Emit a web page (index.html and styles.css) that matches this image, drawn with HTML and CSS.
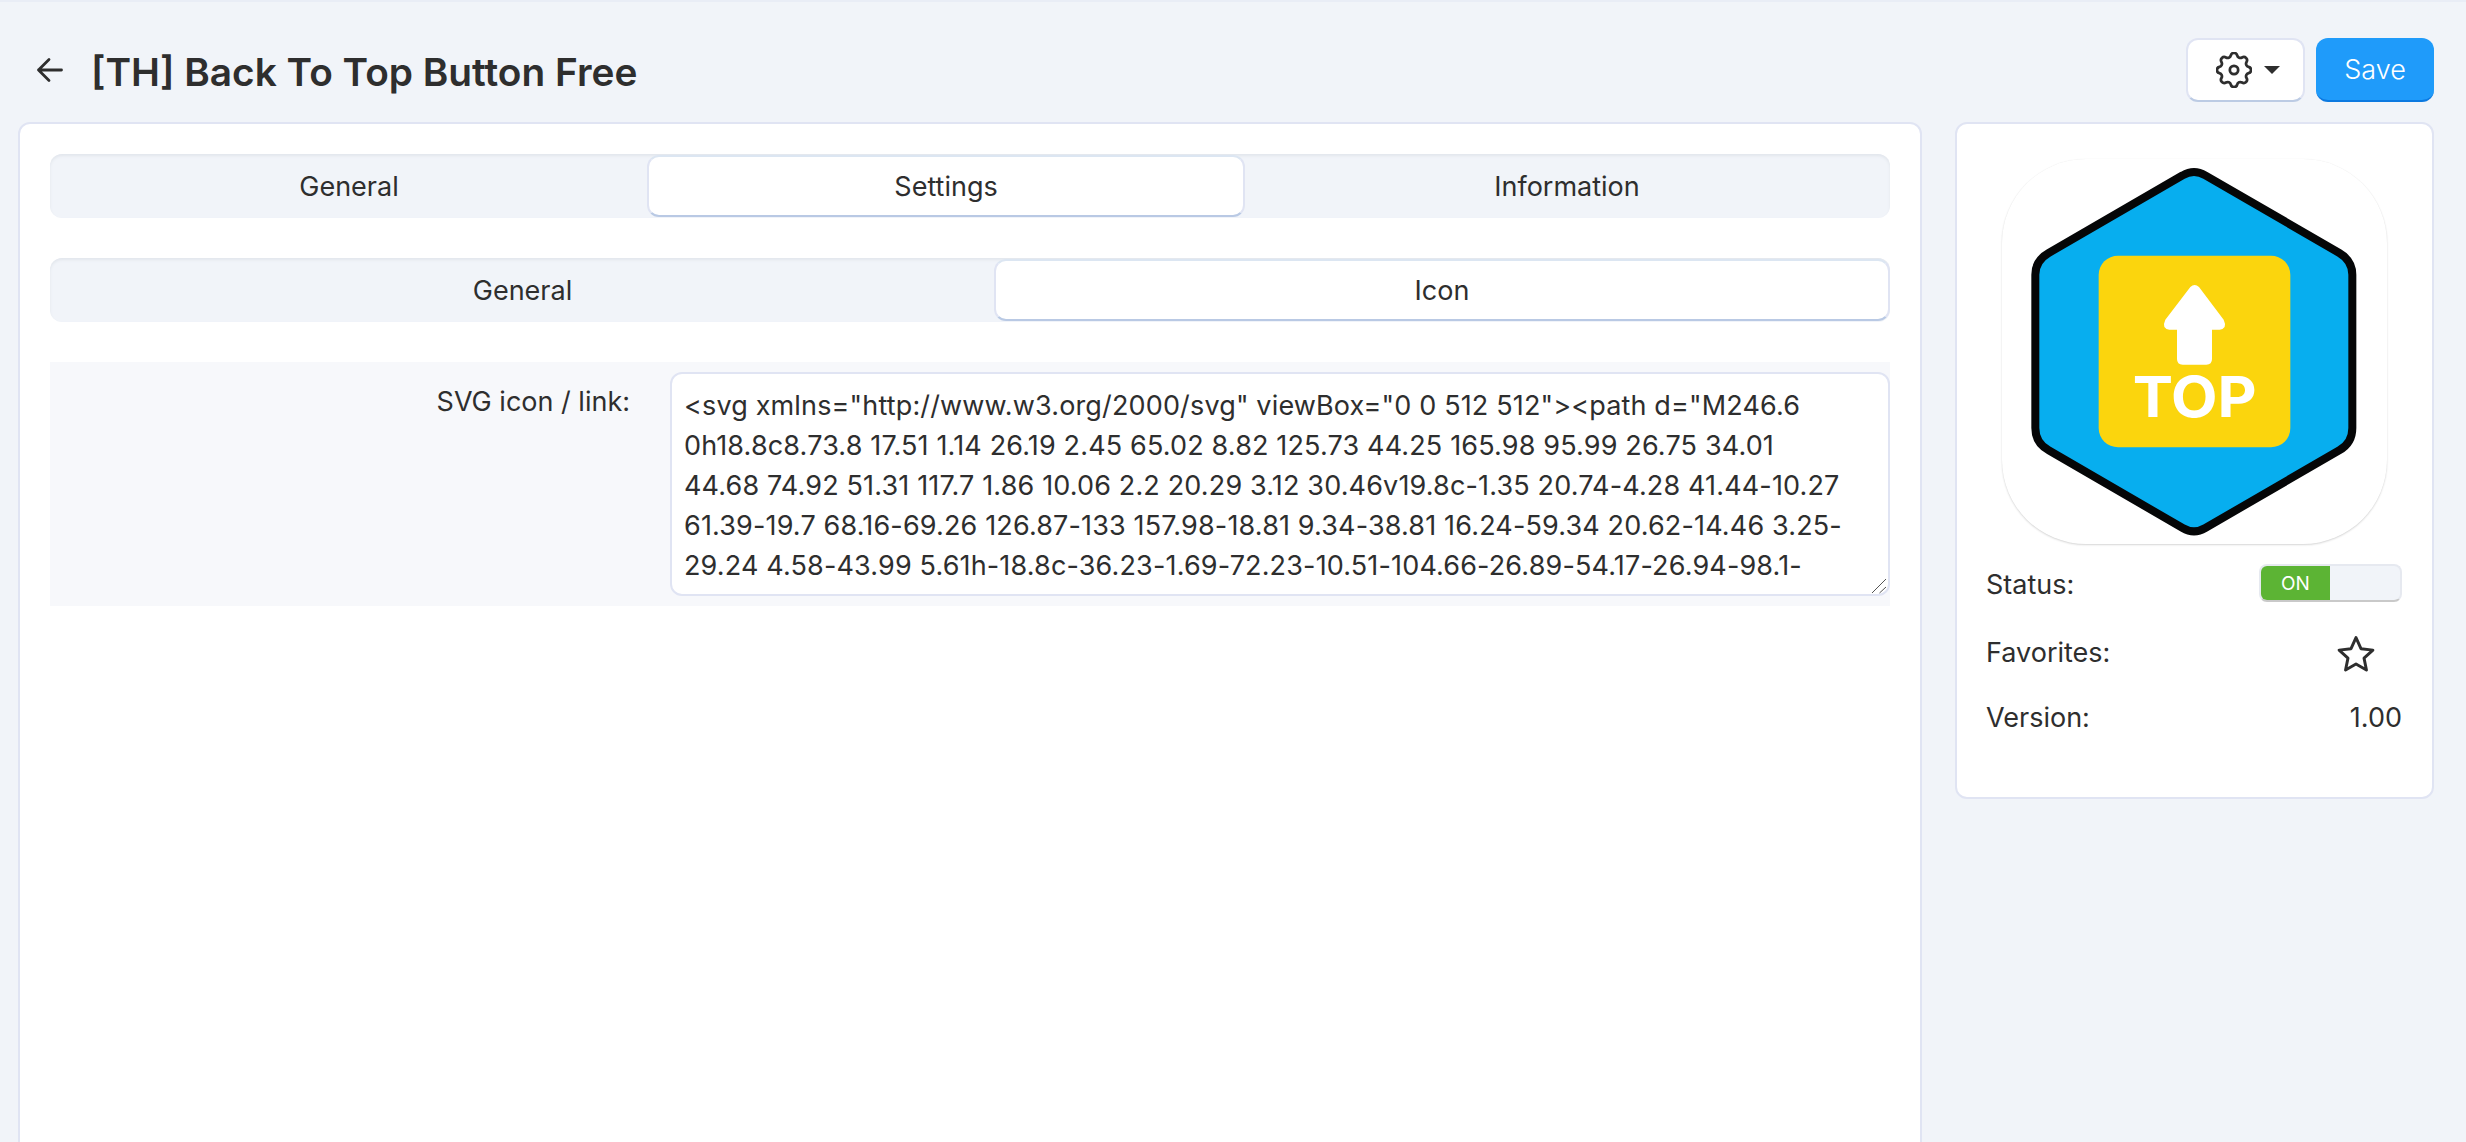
FILE: index.html
```html
<!DOCTYPE html>
<html lang="en">
<head>
<meta charset="utf-8">
<title>[TH] Back To Top Button Free</title>
<link rel="stylesheet" href="styles.css">
</head>
<body>
<header class="topbar">
  <a class="back" href="#" aria-label="Back">
    <svg class="back-icon" viewBox="0 0 32 32"><path d="M27.5 16H4.5M15 5.5 4.5 16 15 26.5"/></svg>
  </a>
  <h1 class="title">[TH] Back To Top Button Free</h1>
  <div class="actions">
    <button class="btn btn-light" type="button" aria-label="Options">
      <svg class="gear" viewBox="2.5 2.5 19 19"><path d="M10.325 4.317c.426-1.756 2.924-1.756 3.35 0a1.724 1.724 0 0 0 2.573 1.066c1.543-.94 3.31.826 2.37 2.37a1.724 1.724 0 0 0 1.065 2.572c1.756.426 1.756 2.924 0 3.35a1.724 1.724 0 0 0-1.066 2.573c.94 1.543-.826 3.31-2.37 2.37a1.724 1.724 0 0 0-2.572 1.065c-.426 1.756-2.924 1.756-3.35 0a1.724 1.724 0 0 0-2.573-1.066c-1.543.94-3.31-.826-2.37-2.37a1.724 1.724 0 0 0-1.065-2.572c-1.756-.426-1.756-2.924 0-3.35a1.724 1.724 0 0 0 1.066-2.573c-.94-1.543.826-3.31 2.37-2.37c1 .608 2.296.07 2.572-1.065z"/><circle cx="12" cy="12" r="2.2"/></svg>
      <span class="caret"></span>
    </button>
    <button class="btn btn-primary" type="button">Save</button>
  </div>
</header>
<div class="layout">
  <main class="card main">
    <nav class="tabs tabs-main">
      <a class="tab" href="#">General</a>
      <a class="tab active" href="#">Settings</a>
      <a class="tab" href="#">Information</a>
    </nav>
    <nav class="tabs tabs-sub">
      <a class="tab" href="#">General</a>
      <a class="tab active" href="#">Icon</a>
    </nav>
    <div class="form-row">
      <label class="form-label" for="svgicon">SVG icon / link:</label>
      <div class="input-wrap">
        <textarea class="form-input" id="svgicon" spellcheck="false" wrap="off">&lt;svg xmlns="http://www.w3.org/2000/svg" viewBox="0 0 512 512"&gt;&lt;path d="M246.6
0h18.8c8.73.8 17.51 1.14 26.19 2.45 65.02 8.82 125.73 44.25 165.98 95.99 26.75 34.01
44.68 74.92 51.31 117.7 1.86 10.06 2.2 20.29 3.12 30.46v19.8c-1.35 20.74-4.28 41.44-10.27
61.39-19.7 68.16-69.26 126.87-133 157.98-18.81 9.34-38.81 16.24-59.34 20.62-14.46 3.25-
29.24 4.58-43.99 5.61h-18.8c-36.23-1.69-72.23-10.51-104.66-26.89-54.17-26.94-98.1-</textarea>
        <svg class="grip" viewBox="0 0 16 16"><path d="M1 15 15 1M8.5 15 15 9"/></svg>
      </div>
    </div>
  </main>
  <aside class="card side">
    <div class="app-icon">
      <svg class="app-art" viewBox="155 88 1155 1155">
        <path class="hex" d="M697 137Q731 117 765 137L1167 370Q1206 393 1206 435V895Q1206 940 1167 962L765 1195Q731 1215 697 1195L295 962Q255 940 255 895V435Q255 393 295 370Z"/>
        <rect class="plate" x="445" y="378" width="575" height="575" rx="58"/>
        <path class="arrow" d="M720 472Q733 460 746 472L820 570Q832 596 808 600H785V688Q785 705 768 705H697Q680 705 680 688V600H657Q633 596 645 570Z"/>
        <text class="top-text" x="547" y="862" textLength="372" lengthAdjust="spacingAndGlyphs">TOP</text>
      </svg>
    </div>
    <dl class="meta">
      <div class="meta-row">
        <dt>Status:</dt>
        <dd><span class="toggle"><span class="toggle-on">ON</span><span class="toggle-off"></span></span></dd>
      </div>
      <div class="meta-row">
        <dt>Favorites:</dt>
        <dd class="star-cell"><svg class="star" viewBox="0 0 36 36"><path d="M18 2.5 22.7 13l11.3 1.3-8.4 7.6 2.3 11.2L18 27.5 8.1 33.1l2.3-11.2L2 14.3 13.3 13Z"/></svg></dd>
      </div>
      <div class="meta-row">
        <dt>Version:</dt>
        <dd>1.00</dd>
      </div>
    </dl>
  </aside>
</div>
</body>
</html>
```
FILE: styles.css
```css
* { box-sizing: border-box; }
html, body { height: 100%; }
body {
  margin: 0;
  overflow: hidden;
  background: #f1f4f9;
  color: #2e2e2e;
  font-family: Inter, "Liberation Sans", sans-serif;
  font-size: 27px;
  border-top: 2px solid #e9edf6;
  display: flex;
  flex-direction: column;
}
.topbar {
  display: flex;
  align-items: center;
  height: 120px;
  padding: 18px 32px 0 34px;
  flex: none;
}
.back { display: flex; color: #2e2e2e; margin-right: 25px; margin-top: -2px; }
.back-icon { width: 32px; height: 32px; fill: none; stroke: currentColor; stroke-width: 2.8; stroke-linecap: round; stroke-linejoin: round; }
.title { margin: 2px 0 0; font-size: 38.8px; font-weight: 600; line-height: 1.2; }
.actions { margin-left: auto; display: flex; gap: 11px; margin-top: -2px; }
.btn {
  height: 64px;
  border-radius: 12px;
  font-family: inherit;
  font-size: 27px;
  display: flex;
  align-items: center;
  justify-content: center;
  padding: 0;
  cursor: pointer;
}
.btn-light {
  width: 119px;
  gap: 12px;
  background: #fff;
  border: 2px solid #e0e4f3;
  border-bottom-color: #bccbe4;
  color: #2e2e2e;
  padding-left: 4px;
}
.gear { width: 36px; height: 36px; fill: none; stroke: currentColor; stroke-width: 1.45; stroke-linejoin: round; }
.caret { width: 0; height: 0; border-left: 8px solid transparent; border-right: 8px solid transparent; border-top: 8px solid #2e2e2e; }
.btn-primary {
  width: 118px;
  background: #1f9bfa;
  border: 0;
  border-bottom: 2px solid #0c79e0;
  color: #fff;
  font-weight: 300;
}
.layout {
  display: flex;
  align-items: flex-start;
  gap: 33px;
  padding: 0 32px 0 18px;
  flex: none;
}
.card {
  background: #fff;
  border: 2px solid #e0e4f3;
  border-radius: 12px;
}
.main {
  width: 1904px;
  height: 1100px;
  padding: 30px 30px 0;
}
.side {
  width: 479px;
  height: 677px;
  padding: 35px 30px 0 29px;
}
.tabs {
  display: flex;
  height: 64px;
  background: #f1f4f9;
  border-radius: 12px;
  box-shadow: inset 0 2px 3px #e2e6ec;
}
.tabs-sub { margin-top: 40px; }
.tab {
  display: flex;
  align-items: center;
  justify-content: center;
  color: #2e2e2e;
  text-decoration: none;
  border-radius: 12px;
  flex: 1 1 0;
}
.tabs-main .tab:nth-child(1) { flex: 0 0 598px; }
.tabs-main .tab:nth-child(2) { flex: 0 0 598px; }
.tabs-sub .tab:nth-child(1) { flex: 0 0 945px; }
.tab.active {
  background: #fff;
  border: 2px solid #e0e4f3;
  border-top-color: #dce6f2;
  border-bottom-color: #b9c9e4;
  margin: 1px 0;
}
.tabs-main .tab.active { margin: 1px -1px; }
.tabs-sub .tab.active { margin-left: -1px; }
.form-row {
  display: flex;
  margin-top: 40px;
  height: 244px;
  padding: 10px 0 10px 0;
  background: #f7f8fb;
}
.form-label {
  width: 620px;
  padding: 14px 40px 0 0;
  text-align: right;
  flex: none;
  line-height: 32px;
}
.input-wrap {
  flex: 1;
  display: flex;
  position: relative;
}
.form-input {
  flex: 1;
  height: 224px;
  margin: 0;
  padding: 12px 12px;
  border: 2px solid #e0e4f3;
  border-radius: 12px;
  background: #fff;
  color: #2e2e2e;
  font-family: inherit;
  font-size: 27px;
  letter-spacing: 0.15px;
  line-height: 40px;
  overflow: hidden;
  resize: none;
  outline: none;
}
.grip {
  position: absolute;
  right: 3px;
  bottom: 2px;
  width: 16px;
  height: 16px;
  fill: none;
  stroke: #555;
  stroke-width: 1;
}
.app-icon {
  width: 385px;
  height: 385px;
  margin: 0 auto;
  border-radius: 84px;
  background: #fff;
  box-shadow: 0 0 1px rgba(0,0,0,.06), 0 1px 2px rgba(0,0,0,.16);
}
.app-art { display: block; width: 100%; height: 100%; }
.hex { fill: #07aeef; stroke: #050607; stroke-width: 24; }
.plate { fill: #fbd50d; }
.arrow { fill: #fff; }
.top-text { fill: #fff; font-family: Inter, sans-serif; font-size: 168px; font-weight: 700; }
.meta { margin: 20px 0 0; }
.meta-row {
  display: flex;
  align-items: center;
  justify-content: space-between;
  height: 38px;
  margin-bottom: 31px;
}
.meta-row:nth-child(2) { margin-bottom: 27px; }
.meta-row:first-child dt { margin-top: 2px; }
.meta-row dd { margin: 0; }
.toggle {
  display: flex;
  width: 143px;
  height: 38px;
  border: 2px solid #e6e9f0;
  border-bottom-color: #c9c9c9;
  border-radius: 8px;
  background: #f1f4f9;
  overflow: hidden;
}
.toggle-on {
  width: 69px;
  background: #5cb434;
  color: #fff;
  font-size: 19px;
  display: flex;
  align-items: center;
  justify-content: center;
}
.star-cell { margin-right: 27px !important; margin-top: 4px !important; display: flex; }
.star { width: 38px; height: 38px; fill: none; stroke: #2e2e2e; stroke-width: 2.8; stroke-linejoin: round; }
```
